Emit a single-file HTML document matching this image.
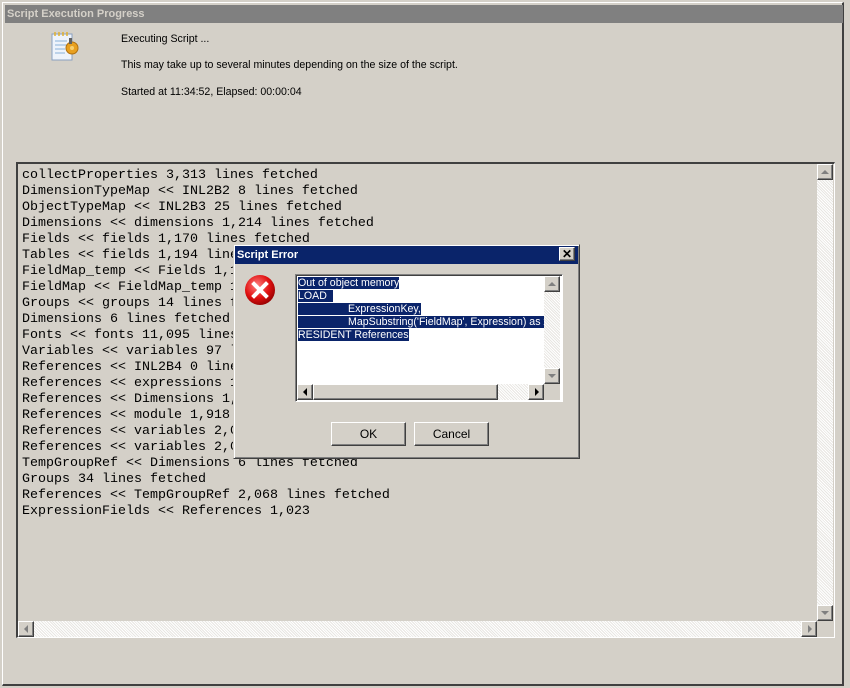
<!DOCTYPE html>
<html><head><style>
*{margin:0;padding:0;box-sizing:border-box}
body{width:850px;height:688px;background:#d4d0c8;position:relative;overflow:hidden;font-family:"Liberation Sans",Tahoma,sans-serif;font-size:10.6px;color:#000}
.abs{position:absolute}
.win{left:2px;top:2px;width:842px;height:684px;background:#d4d0c8;border-top:1px solid #fff;border-left:1px solid #fff;border-right:2px solid #404040;border-bottom:2px solid #404040}
.title{left:5px;top:5px;width:838px;height:18px;background:#808080;color:#d4d0c8;font-weight:bold;font-size:11px;line-height:18px;padding-left:2px}
.box{left:16px;top:162px;width:819px;height:476px;border-top:2px solid #404040;border-left:2px solid #404040;border-right:1px solid #fff;border-bottom:1px solid #fff;background:#d4d0c8}
.log{left:22px;top:168px;font-family:"Liberation Mono","Courier New",monospace;font-size:13.33px;line-height:16px;white-space:pre}
.track{background-color:#e8e6e2;background-image:repeating-linear-gradient(45deg,#fff 0 1px,transparent 1px 2px)}
.btn{background:#d4d0c8;border-top:1px solid #fff;border-left:1px solid #fff;border-right:1px solid #404040;border-bottom:1px solid #404040;box-shadow:inset -1px -1px 0 #808080}
.tri{position:absolute;width:0;height:0}
.dlg{left:233px;top:244px;width:347px;height:215px;background:#d4d0c8;border-top:1px solid #d4d0c8;border-left:1px solid #d4d0c8;border-right:1px solid #404040;border-bottom:1px solid #404040;box-shadow:inset 1px 1px 0 #fff,inset -1px -1px 0 #808080}
</style></head><body>
<div class="abs win"></div>
<div class="abs title">Script Execution Progress</div>
<svg class="abs" style="left:50px;top:30px" width="32" height="34" viewBox="0 0 32 34">
<rect x="2" y="4" width="20" height="26" fill="#eef3fb" stroke="#8aa0c0"/>
<g stroke="#e0b030" stroke-width="1.5"><line x1="5" y1="2" x2="5" y2="6"/><line x1="9" y1="2" x2="9" y2="6"/><line x1="13" y1="2" x2="13" y2="6"/><line x1="17" y1="2" x2="17" y2="6"/></g>
<g stroke="#8ab0d8"><line x1="5" y1="11" x2="17" y2="11"/><line x1="5" y1="15" x2="17" y2="15"/><line x1="5" y1="19" x2="15" y2="19"/><line x1="5" y1="23" x2="15" y2="23"/></g>
<circle cx="22" cy="18" r="6" fill="#e8a020" stroke="#b07010"/>
<circle cx="22" cy="18" r="2" fill="#f8d070"/>
<rect x="19" y="8" width="3" height="6" fill="#606060"/>
</svg>
<div class="abs" style="left:121px;top:33px">Executing Script ...</div>
<div class="abs" style="left:121px;top:59px">This may take up to several minutes depending on the size of the script.</div>
<div class="abs" style="left:121px;top:86px">Started at 11:34:52, Elapsed: 00:00:04</div>

<div class="abs box"></div>
<div class="abs log">collectProperties 3,313 lines fetched
DimensionTypeMap &lt;&lt; INL2B2 8 lines fetched
ObjectTypeMap &lt;&lt; INL2B3 25 lines fetched
Dimensions &lt;&lt; dimensions 1,214 lines fetched
Fields &lt;&lt; fields 1,170 lines fetched
Tables &lt;&lt; fields 1,194 lines fetched
FieldMap_temp &lt;&lt; Fields 1,170 lines fetched
FieldMap &lt;&lt; FieldMap_temp 1,170 lines
Groups &lt;&lt; groups 14 lines fetched
Dimensions 6 lines fetched
Fonts &lt;&lt; fonts 11,095 lines fetched
Variables &lt;&lt; variables 97 lines fetched
References &lt;&lt; INL2B4 0 lines fetched
References &lt;&lt; expressions 1,000 lines
References &lt;&lt; Dimensions 1,214 lines
References &lt;&lt; module 1,918 lines
References &lt;&lt; variables 2,000 lines
References &lt;&lt; variables 2,000 lines
TempGroupRef &lt;&lt; Dimensions 6 lines fetched
Groups 34 lines fetched
References &lt;&lt; TempGroupRef 2,068 lines fetched
ExpressionFields &lt;&lt; References 1,023</div>
<div class="abs track" style="left:817px;top:164px;width:16px;height:457px"></div>
<div class="abs btn" style="left:817px;top:164px;width:16px;height:16px"><div class="tri" style="left:3px;top:5px;border-left:4px solid transparent;border-right:4px solid transparent;border-bottom:4px solid #808080"></div></div>
<div class="abs btn" style="left:817px;top:605px;width:16px;height:16px"><div class="tri" style="left:3px;top:5px;border-left:4px solid transparent;border-right:4px solid transparent;border-top:4px solid #808080"></div></div>
<div class="abs track" style="left:18px;top:621px;width:799px;height:16px"></div>
<div class="abs btn" style="left:18px;top:621px;width:16px;height:16px"><div class="tri" style="left:5px;top:3px;border-top:4px solid transparent;border-bottom:4px solid transparent;border-right:4px solid #808080"></div></div>
<div class="abs btn" style="left:801px;top:621px;width:16px;height:16px"><div class="tri" style="left:6px;top:3px;border-top:4px solid transparent;border-bottom:4px solid transparent;border-left:4px solid #808080"></div></div>
<div class="abs" style="left:817px;top:621px;width:16px;height:16px;background:#d4d0c8"></div>

<div class="abs dlg"></div>
<div class="abs" style="left:235px;top:246px;width:343px;height:18px;background:#0a246a;color:#fff;font-weight:bold;font-size:11px;line-height:18px;padding-left:2px">Script Error</div>
<div class="abs btn" style="left:559px;top:247px;width:16px;height:14px;font-size:12px;line-height:12px;text-align:center;font-weight:bold">✕</div>
<svg class="abs" style="left:244px;top:274px" width="34" height="34" viewBox="0 0 34 34">
<defs><radialGradient id="g" cx="0.4" cy="0.35" r="0.7"><stop offset="0" stop-color="#ff8080"/><stop offset="0.6" stop-color="#e01010"/><stop offset="1" stop-color="#900000"/></radialGradient></defs>
<circle cx="16" cy="16" r="15" fill="url(#g)"/>
<path d="M10 10 L22 22 M22 10 L10 22" stroke="#fff" stroke-width="4" stroke-linecap="square"/>
</svg>
<div class="abs" style="left:295px;top:274px;width:268px;height:128px;border-top:1px solid #808080;border-left:1px solid #808080;border-right:1px solid #fff;border-bottom:1px solid #fff"></div>
<div class="abs" style="left:296px;top:275px;width:266px;height:126px;border-top:1px solid #404040;border-left:1px solid #404040;background:#fff"></div>
<div class="abs" style="left:298px;top:277px;line-height:13px;color:#fff;white-space:pre;width:246px;overflow:hidden"><span style="background:#0a246a">Out of object memory</span>
<span style="background:#0a246a">LOAD &nbsp;</span>
<span style="background:#0a246a">                 ExpressionKey,</span>
<span style="background:#0a246a">                 MapSubstring('FieldMap', Expression) as x</span>
<span style="background:#0a246a">RESIDENT References</span></div>
<div class="abs track" style="left:544px;top:276px;width:16px;height:108px"></div>
<div class="abs btn" style="left:544px;top:276px;width:16px;height:16px"><div class="tri" style="left:3px;top:5px;border-left:4px solid transparent;border-right:4px solid transparent;border-bottom:4px solid #808080"></div></div>
<div class="abs btn" style="left:544px;top:368px;width:16px;height:16px"><div class="tri" style="left:3px;top:5px;border-left:4px solid transparent;border-right:4px solid transparent;border-top:4px solid #808080"></div></div>
<div class="abs track" style="left:297px;top:384px;width:247px;height:16px"></div>
<div class="abs btn" style="left:313px;top:384px;width:185px;height:16px"></div>
<div class="abs btn" style="left:297px;top:384px;width:16px;height:16px"><div class="tri" style="left:5px;top:3px;border-top:4px solid transparent;border-bottom:4px solid transparent;border-right:4px solid #000"></div></div>
<div class="abs btn" style="left:528px;top:384px;width:16px;height:16px"><div class="tri" style="left:6px;top:3px;border-top:4px solid transparent;border-bottom:4px solid transparent;border-left:4px solid #000"></div></div>
<div class="abs" style="left:544px;top:384px;width:16px;height:16px;background:#d4d0c8"></div>
<div class="abs btn" style="left:331px;top:422px;width:75px;height:24px;text-align:center;line-height:22px;font-size:12px">OK</div>
<div class="abs btn" style="left:414px;top:422px;width:75px;height:24px;text-align:center;line-height:22px;font-size:12px">Cancel</div>
</body></html>
